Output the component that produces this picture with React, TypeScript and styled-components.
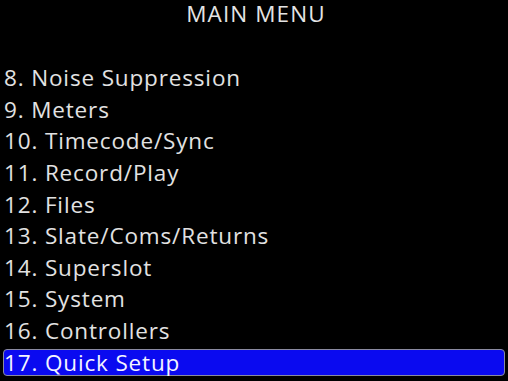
import React from "react";
import styled, { createGlobalStyle } from "styled-components";

const Global = createGlobalStyle`
  html, body { margin: 0; padding: 0; background: #000; }
  body { width: 508px; height: 381px; overflow: hidden; }
`;

const Screen = styled.div`
  width: 508px;
  height: 381px;
  background: #000;
  color: #e2e2e2;
  font-family: "Open Sans", "Noto Sans", sans-serif;
  display: flex;
  flex-direction: column;
  box-sizing: border-box;
`;

const Title = styled.div`
  text-align: center;
  font-size: 22.5px;
  letter-spacing: 1.1px;
  line-height: 28px;
  height: 28px;
  padding-left: 4px;
  color: #e4e4e4;
`;

const List = styled.div`
  display: flex;
  flex-direction: column;
  margin-top: 34px;
  padding: 0 3px;
`;

const Row = styled.div<{ $selected?: boolean }>`
  height: 31.6px;
  display: flex;
  align-items: center;
  font-size: 22.5px;
  letter-spacing: 0.85px;
  box-sizing: border-box;
  color: ${(p) => (p.$selected ? "#f4f4ff" : "#e2e2e2")};
  background: ${(p) => (p.$selected ? "#0a0af0" : "transparent")};
  border: 1px solid ${(p) => (p.$selected ? "#8a8aa0" : "transparent")};
  border-radius: 4px;
  ${(p) => (p.$selected ? "height: 27px; margin-top: 3px;" : "")}
`;

const items = [
  "8. Noise Suppression",
  "9. Meters",
  "10. Timecode/Sync",
  "11. Record/Play",
  "12. Files",
  "13. Slate/Coms/Returns",
  "14. Superslot",
  "15. System",
  "16. Controllers",
  "17. Quick Setup",
];

export default function App() {
  return (
    <>
      <Global />
      <Screen>
        <Title>MAIN MENU</Title>
        <List>
          {items.map((t, i) => (
            <Row key={t} $selected={i === items.length - 1}>
              {t}
            </Row>
          ))}
        </List>
      </Screen>
    </>
  );
}
